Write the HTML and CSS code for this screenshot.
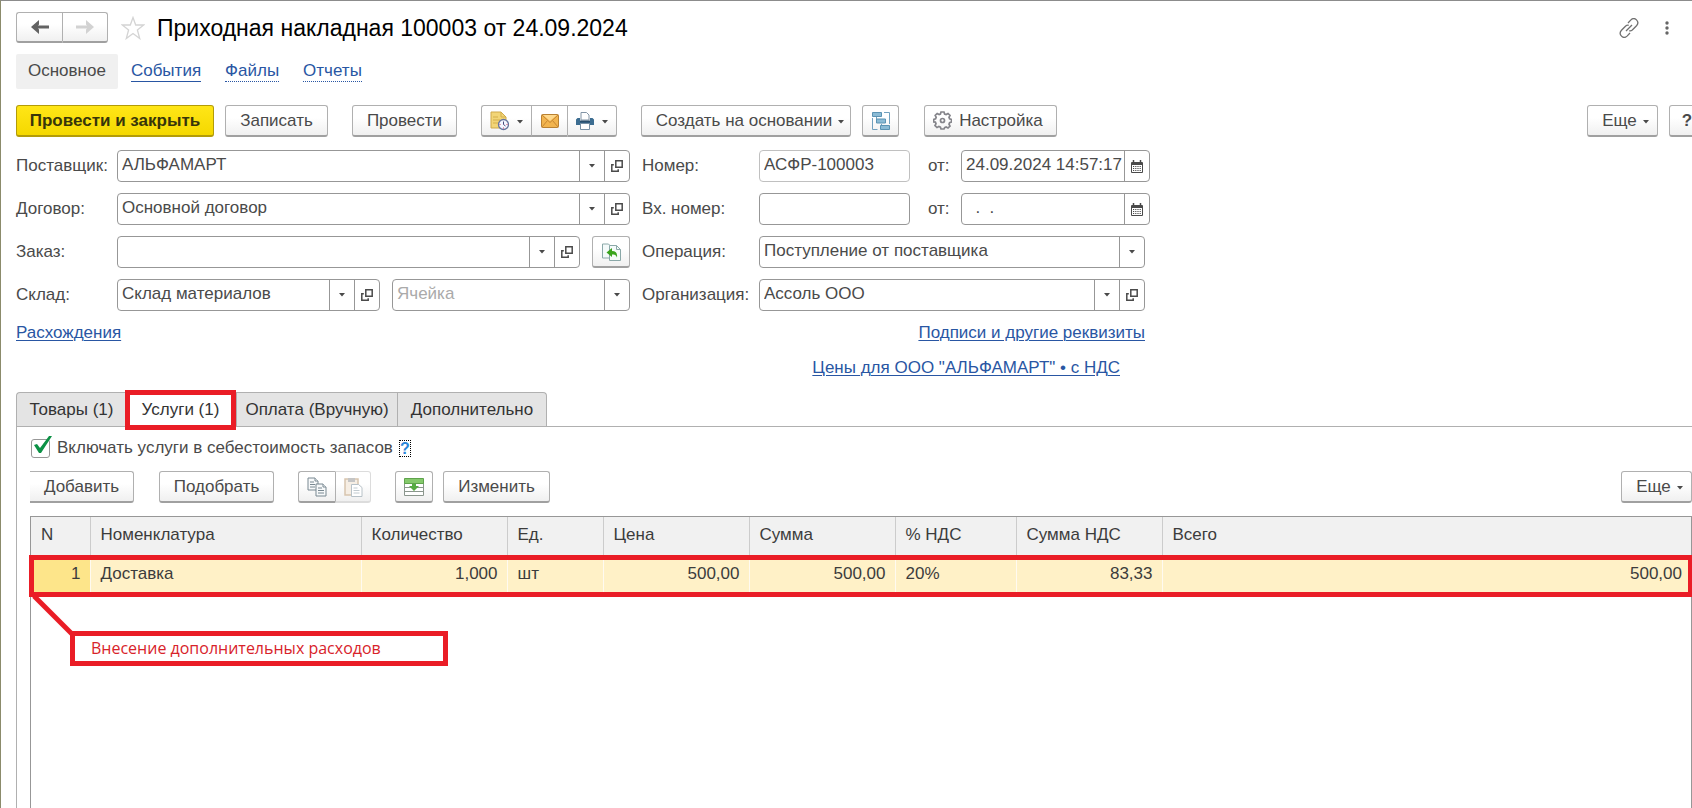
FILE: index.html
```html
<!DOCTYPE html>
<html lang="ru">
<head>
<meta charset="utf-8">
<title>Приходная накладная 100003 от 24.09.2024</title>
<link rel="stylesheet" href="styles.css">
</head>
<body>
<svg class="sprite" aria-hidden="true">
  <symbol id="caret" viewBox="0 0 6 4"><path d="M0 0h6L3 3.500z" fill="currentColor"/></symbol>
  <symbol id="open" viewBox="0 0 12 12"><g fill="none" stroke="currentColor" stroke-width="1.5"><path d="M4.8.8h6.400v6.400H4.800z"/><path d="M2.800 4.800h-2v6.400h6.400v-2"/></g></symbol>
  <symbol id="calendar" viewBox="0 0 12 13"><path d="M1 2h10q1 0 1 1v9q0 1-1 1H1q-1 0-1-1V3q0-1 1-1z" fill="#4a4a4a"/><path d="M2.500 0v3M9.500 0v3" stroke="#4a4a4a" stroke-width="1.500"/><path d="M1 5h10v7H1z" fill="#fff"/><path d="M2 6.500h8M2 8.500h8M2 10.500h8" stroke="#4a4a4a" stroke-dasharray="1.200 1"/></symbol>
</svg>
<main class="window">
  <header class="titlebar">
    <div class="group">
      <button class="btn nav" aria-label="Назад"><svg width="18" height="14" viewBox="0 0 18 14"><path d="M0 7l8-7v4.500l-1 1h11v3H7l1 1V14z" fill="#636363"/></svg></button>
      <button class="btn nav" aria-label="Вперед" disabled><svg width="18" height="14" viewBox="0 0 18 14"><path d="M18 7l-8-7v4.500l1 1H0v3h11l-1 1V14z" fill="#d2d2d2"/></svg></button>
    </div>
    <svg class="star" width="24" height="24" viewBox="0 0 24 24"><path d="M12 1.500l2.700 7.500h8l-6.300 5 2.300 8.500L12 17.500l-6.700 5L7.600 14 1.300 9h8z" fill="#fff" stroke="#d4d4d4" stroke-width="1.300"/></svg>
    <h1 class="title">Приходная накладная 100003 от 24.09.2024</h1>
    <button class="bare" aria-label="Ссылка"><svg width="20" height="20" viewBox="0 0 20 20" fill="none" stroke="#707070" stroke-width="1.300"><path d="M9 5l2.700-2.900c4-4 9.500 1.500 5.800 5.700l-4.200 4.200q-1.500 1.200-3 .6M11 15l-2.700 2.900c-4 4-9.500-1.500-5.800-5.700l4.200-4.200q1.500-1.200 3-.6M7 13l6-6"/></svg></button>
    <button class="bare" aria-label="Меню"><svg width="4" height="14" viewBox="0 0 4 14" fill="#666"><circle cx="2" cy="2" r="1.700"/><circle cx="2" cy="7" r="1.700"/><circle cx="2" cy="12" r="1.700"/></svg></button>
  </header>

  <nav class="sections">
    <span class="section-current">Основное</span>
    <a class="section solid" href="#">События</a>
    <a class="section" href="#">Файлы</a>
    <a class="section" href="#">Отчеты</a>
  </nav>

  <div class="toolbar commands">
    <button class="btn primary">Провести и закрыть</button>
    <button class="btn w-save">Записать</button>
    <button class="btn w-post">Провести</button>
    <div class="group reports">
      <button class="btn w-report" aria-label="Отчеты"><svg width="19" height="20" viewBox="0 0 19 20"><path d="M1 1h10l5 5v11H1z" fill="#f2d577" stroke="#cfa94a"/><path d="M11 1v5h5M3 6h5M3 9h7M3 12h5" fill="none" stroke="#d3ae4b"/><circle cx="13.500" cy="13.500" r="5" fill="#f4f6ff" stroke="#66749c" stroke-width="1.300"/><path d="M13.500 10.500v3l2 1.500" fill="none" stroke="#4a4a7a"/><path d="M9.500 13.500h1M16.500 13.500h1M13.500 16.500v1" stroke="#d46"/></svg><svg class="caret"><use href="#caret"/></svg></button>
      <button class="btn w-mail" aria-label="Отправить"><svg width="18" height="14" viewBox="0 0 18 14"><rect x=".5" y=".5" width="17" height="13" rx="1" fill="#f2b44e" stroke="#b98132"/><path d="M1 1l8 7.500L17 1M1 13l5.500-6.500M17 13l-5.500-6.500" fill="none" stroke="#c78733"/><path d="M2 1h14L9 7z" fill="#ffd98c"/></svg></button>
      <button class="btn w-report" aria-label="Печать"><svg width="18" height="18" viewBox="0 0 18 18"><path d="M5 8V.5h5.500L13 3v5z" fill="#fff" stroke="#8294a5"/><path d="M1.500 6H4v3h10V6h2.500L18 7.500V13H0V7.500z" fill="#3c6d91"/><path d="M4 8.500h10v2H4z" fill="#294e6d"/><path d="M4.500 11.500h9v6h-9z" fill="#fff" stroke="#7890a5"/></svg><svg class="caret"><use href="#caret"/></svg></button>
    </div>
    <button class="btn w-create">Создать на основании <svg class="caret"><use href="#caret"/></svg></button>
    <button class="btn w-tree" aria-label="Структура"><svg width="18" height="18" viewBox="0 0 18 18"><g fill="none" stroke="#72a1be"><path d="M.5 6v11.500h5M12 .5h5.500V12M4.500 5v5h4M9.500 12v4"/></g><g fill="#8bbbd5" stroke="#5b93b3"><path d="M.5.500h9v4h-9zM4.500 7h9v4h-9zM8.500 13.500h9v4h-9z"/></g></svg></button>
    <button class="btn w-setup"><svg width="19" height="19" viewBox="0 0 19 19" fill="none" stroke="#85858b" stroke-width="1.700"><path d="M8 1h3l.6 2 1.500.6L15 2.500 17 4.500l-1 1.900.6 1.500 1.900.6v2.500l-1.900.6-.6 1.500 1 1.900-2 2-1.900-1-1.500.6L11 18H8l-.6-1.900-1.500-.6-1.900 1-2-2 1-1.900-.6-1.500L.7 11V8.500l1.900-.6.6-1.500-1-1.900 2-2 1.900 1L7.400 3z"/><circle cx="9.500" cy="9.500" r="2"/></svg>Настройка</button>
    <button class="btn w-more push">Еще <svg class="caret"><use href="#caret"/></svg></button>
    <button class="btn w-help">?</button>
  </div>

  <form class="form">
    <div class="column">
      <div class="row"><label class="label" for="supplier">Поставщик:</label>
        <div class="field"><input class="input" id="supplier" value="АЛЬФАМАРТ"><button type="button" class="part" aria-label="Выбрать"><svg class="caret"><use href="#caret"/></svg></button><button type="button" class="part" aria-label="Открыть"><svg class="open"><use href="#open"/></svg></button></div></div>
      <div class="row"><label class="label" for="contract">Договор:</label>
        <div class="field"><input class="input" id="contract" value="Основной договор"><button type="button" class="part" aria-label="Выбрать"><svg class="caret"><use href="#caret"/></svg></button><button type="button" class="part" aria-label="Открыть"><svg class="open"><use href="#open"/></svg></button></div></div>
      <div class="row"><label class="label" for="order">Заказ:</label>
        <div class="field"><input class="input" id="order"><button type="button" class="part" aria-label="Выбрать"><svg class="caret"><use href="#caret"/></svg></button><button type="button" class="part" aria-label="Открыть"><svg class="open"><use href="#open"/></svg></button></div>
        <button type="button" class="btn w-fill" aria-label="Заполнить"><svg width="19" height="18" viewBox="0 0 19 18"><path d="M.5 1h6L9 3.500V15H.5z" fill="#f4fafa" stroke="#8aa8a8"/><path d="M7.500 2.500h7l4 4v11h-11z" fill="#f4fafa" stroke="#8aa8a8"/><path d="M14.500 2.500v4h4" fill="none" stroke="#8aa8a8"/><path d="M4.500 9.500L10 5v3c4 0 5.500 2 5 6.500-1-2.500-2.200-3-5-3V14z" fill="#38a31c"/></svg></button></div>
      <div class="row"><label class="label" for="store">Склад:</label>
        <div class="field"><input class="input" id="store" value="Склад материалов"><button type="button" class="part" aria-label="Выбрать"><svg class="caret"><use href="#caret"/></svg></button><button type="button" class="part" aria-label="Открыть"><svg class="open"><use href="#open"/></svg></button></div>
        <div class="field cell"><input class="input" aria-label="Ячейка" placeholder="Ячейка"><button type="button" class="part" aria-label="Выбрать"><svg class="caret"><use href="#caret"/></svg></button></div></div>
    </div>
    <div class="column second">
      <div class="row"><label class="label" for="number">Номер:</label>
        <div class="field short pale"><input class="input" id="number" value="АСФР-100003"></div>
        <label class="from" for="date">от:</label>
        <div class="field"><input class="input" id="date" value="24.09.2024 14:57:17"><button type="button" class="part" aria-label="Календарь"><svg class="calendar"><use href="#calendar"/></svg></button></div></div>
      <div class="row"><label class="label" for="innumber">Вх. номер:</label>
        <div class="field short"><input class="input" id="innumber"></div>
        <label class="from" for="indate">от:</label>
        <div class="field"><input class="input" id="indate" value="  .  ."><button type="button" class="part" aria-label="Календарь"><svg class="calendar"><use href="#calendar"/></svg></button></div></div>
      <div class="row inset"><label class="label" for="operation">Операция:</label>
        <div class="field"><select class="input" id="operation"><option>Поступление от поставщика</option></select><span class="part"><svg class="caret"><use href="#caret"/></svg></span></div></div>
      <div class="row inset"><label class="label" for="company">Организация:</label>
        <div class="field"><input class="input" id="company" value="Ассоль ООО"><button type="button" class="part" aria-label="Выбрать"><svg class="caret"><use href="#caret"/></svg></button><button type="button" class="part" aria-label="Открыть"><svg class="open"><use href="#open"/></svg></button></div></div>
    </div>
  </form>
  <div class="links"><a class="link" href="#">Расхождения</a><a class="link" href="#">Подписи и другие реквизиты</a></div>
  <div class="links prices"><a class="link" href="#">Цены для ООО "АЛЬФАМАРТ" • с НДС</a></div>

  <div class="tabs" role="tablist">
    <button class="tab t-goods" role="tab">Товары (1)</button>
    <button class="tab active" role="tab" aria-selected="true">Услуги (1)</button>
    <button class="tab t-pay" role="tab">Оплата (Вручную)</button>
    <button class="tab t-extra" role="tab">Дополнительно</button>
  </div>

  <section class="panel">
    <div class="include">
      <span class="check"><input class="checkbox" type="checkbox" id="include" checked><svg class="tick" width="20" height="18" viewBox="0 0 20 18"><path d="M2 9l3-1 3 4L17 0l3 0L9 17H7z" fill="#0b9145"/></svg></span>
      <label for="include">Включать услуги в себестоимость запасов</label>
      <button class="hint" aria-label="Справка">?</button>
    </div>
    <div class="toolbar rows">
      <button class="btn w-add">Добавить</button>
      <button class="btn w-pick">Подобрать</button>
      <div class="group clip">
        <button class="btn w-clip" aria-label="Копировать"><svg width="20" height="20" viewBox="0 0 20 20" fill="#f7f9fa" stroke="#788891"><path d="M1 1h7l3 3v9H1z"/><path d="M8 1v3h3M3 5h4M3 7.500h5M3 10h5"/><path d="M9 7h7l3 3v9H9z"/><path d="M16 7v3h3M11 11h4M11 13.500h6M11 16h6"/></svg></button>
        <button class="btn w-paste off" aria-label="Вставить" disabled><svg width="19" height="20" viewBox="0 0 19 20"><path d="M1 2h13v16H1z" fill="#f6eee4" stroke="#d8c5ae" stroke-width="1.500"/><path d="M4 1h7v4H4z" fill="#c5c5c5"/><path d="M7.500 7.500h7l3.500 3v9H7.500z" fill="#fff" stroke="#b8c2c8"/><path d="M9.500 11h4M9.500 13.500h6M9.500 16h6" stroke="#c2cbd0"/></svg></button>
      </div>
      <button class="btn w-grid" aria-label="Загрузить"><svg width="20" height="18" viewBox="0 0 20 18"><path d="M.5 5h19v12.500H.5z" fill="#fff" stroke="#8b968d"/><path d="M1 9.500h18M1 13.500h18" stroke="#8b968d"/><path d="M.5.500h19v5H.5z" fill="#84c96b" stroke="#5fa34c"/><path d="M8 6h4v2h3l-5 5-5-5h3z" fill="#56ab42"/></svg></button>
      <button class="btn w-edit">Изменить</button>
      <button class="btn w-more push">Еще <svg class="caret"><use href="#caret"/></svg></button>
    </div>
    <div class="grid">
      <table class="table">
        <colgroup><col class="c-n"><col class="c-name"><col class="c-sum"><col class="c-unit"><col class="c-sum"><col class="c-sum"><col class="c-vat"><col class="c-sum"><col></colgroup>
        <thead><tr><th>N</th><th>Номенклатура</th><th>Количество</th><th>Ед.</th><th>Цена</th><th>Сумма</th><th>% НДС</th><th>Сумма НДС</th><th>Всего</th></tr></thead>
        <tbody><tr><td class="num first">1</td><td>Доставка</td><td class="num">1,000</td><td>шт</td><td class="num">500,00</td><td class="num">500,00</td><td>20%</td><td class="num">83,33</td><td class="num">500,00</td></tr></tbody>
      </table>
      <div class="row-mark"></div>
      <svg class="leader" width="44" height="44" viewBox="0 0 44 44"><path d="M2 2l40 40" stroke="#ea1d26" stroke-width="5"/></svg>
      <div class="callout">Внесение дополнительных расходов</div>
    </div>
  </section>
</main>
</body>
</html>
```
FILE: styles.css
```css
* { box-sizing: border-box; }
html, body { height: 100%; }
body { margin: 0; overflow: hidden; background: #fff; color: #4a4a4a; font: 17px/20px "Liberation Sans", Arial, sans-serif; }
button, input, select { font: inherit; color: inherit; }
svg { flex: none; }
.sprite { position: absolute; width: 0; height: 0; }
.window { height: 100vh; display: flex; flex-direction: column; padding: 11px 0 0 15px; border-top: 1px solid #8c8c8c; border-left: 1px solid #8b8b6b; }
.group { display: flex; }
.caret { width: 6px; height: 4px; }
.btn .caret { margin-top: 3px; }
.open { width: 12px; height: 12px; }
.calendar { width: 12px; height: 13px; }

.btn { height: 32px; padding: 0; display: flex; align-items: center; justify-content: center; gap: 8px; flex: none; border: 1px solid #b0b0b0; border-bottom: 2px solid #a0a0a0; border-radius: 3px; background: linear-gradient(#fff 40%, #f0f0f0); white-space: nowrap; }
.group .btn:not(:last-child) { border-right: 0; border-radius: 3px 0 0 3px; }
.group .btn:not(:first-child) { border-radius: 0 3px 3px 0; }
.group .btn:not(:first-child):not(:last-child) { border-radius: 0; }
.btn.nav { width: 46px; height: 31px; }

.titlebar { display: flex; align-items: center; padding-right: 20px; }
.star { margin: 0 12px 0 13px; }
.title { flex: 1; margin: 0; font-size: 23px; line-height: 28px; font-weight: 400; color: #000; }
.bare { display: flex; margin-left: 20px; padding: 0 3px; border: 0; background: none; }

.sections { display: flex; align-items: center; gap: 24px; margin-top: 11px; }
.section-current { padding: 7px 12px 8px; margin-right: -11px; background: #f0f0f0; border-radius: 2px; }
.section { line-height: 20px; color: #2956a3; text-decoration: none; border-bottom: 1px dotted #2956a3; }
.section.solid { border-bottom-style: solid; }

.toolbar { display: flex; align-items: center; }
.commands { margin: 16px -13px 0 0; }
.primary { width: 198px; margin-right: 11px; font-weight: 700; color: #37350a; background: linear-gradient(#ffe617, #f5d800); border-color: #b39c08; }
.w-save { width: 103px; margin-right: 24px; }
.w-post { width: 105px; margin-right: 24px; }
.reports { margin-right: 24px; }
.w-report { width: 50px; }
.w-mail { width: 36px; }
.btn.w-create { width: 210px; margin-right: 11px; padding-left: 8px; gap: 6px; }
.w-tree { width: 37px; margin-right: 25px; }
.btn.w-setup { width: 133px; padding-right: 5px; gap: 7px; }
.push { margin-left: auto; }
.btn.w-more { width: 71px; padding-left: 6px; gap: 6px; }
.commands .w-more { margin-right: 11px; }
.w-help { width: 36px; font-weight: 700; }

.form { display: flex; gap: 12px; margin-top: 13px; }
.column { width: 614px; display: grid; gap: 11px; }
.second { width: 508px; }
.row { display: flex; align-items: center; }
.label { width: 101px; flex: none; }
.second .label { width: 117px; }
.inset { padding-right: 5px; }
.field { flex: 1; min-width: 0; height: 32px; display: flex; border: 1px solid #979797; border-radius: 4px; background: #fff; overflow: hidden; }
.field.short { flex: 0 0 151px; }
.field.pale { border-color: #c0c0c0; }
.field.cell { flex: 0 0 238px; margin-left: 12px; }
.from { width: 51px; padding-left: 18px; flex: none; }
.input { flex: 1; min-width: 0; width: 0; padding: 0 0 2px 4px; border: 0; outline: 0; background: none; appearance: none; white-space: pre; }
.input::placeholder { color: #aaa; }
.part { width: 25px; padding: 0; display: flex; align-items: center; justify-content: center; flex: none; border: 0; border-left: 1px solid #979797; background: none; }
.w-fill { width: 38px; margin-left: 12px; }

.links { width: 1129px; display: flex; justify-content: space-between; margin-top: 12px; }
.links.prices { width: 1104px; justify-content: flex-end; margin-top: 15px; }
.link { color: #2956a3; text-underline-offset: 2px; text-decoration-thickness: 1px; }

.tabs { display: flex; margin-top: 14px; position: relative; }
.tab { height: 34px; padding: 0; border: 1px solid #b0b0b0; border-bottom: 0; border-right: 0; background: #e4e4e4; color: #333; white-space: nowrap; }
.t-goods { width: 110px; border-radius: 4px 0 0 0; }
.t-pay { width: 161px; }
.t-extra { width: 150px; border-right: 1px solid #b0b0b0; border-radius: 0 4px 0 0; }
.tab.active { width: 111px; height: 40px; margin: -2px 0 -4px -1px; border: 5px solid #ea1d26; background: #fff; position: relative; }

.panel { flex: 1; min-height: 0; display: flex; flex-direction: column; padding: 10px 0 0 13px; border: 1px solid #b0b0b0; border-width: 1px 0 0 1px; }
.include { display: flex; align-items: center; }
.check { position: relative; display: flex; margin: 2px 7px 0 1px; }
.checkbox { appearance: none; width: 19px; height: 19px; margin: 0; border: 1px solid #979797; border-radius: 3px; }
.tick { position: absolute; left: 1px; top: -3px; pointer-events: none; }
.hint { width: 12px; height: 17px; margin: 2px 0 0 6px; padding: 0; border: 1px dotted #000; background: none; color: #2b86d8; font-weight: 700; font-size: 16px; line-height: 15px; }
.rows { margin-top: 13px; }
.w-add { width: 104px; margin-right: 25px; border-left: 0; border-radius: 0 3px 3px 0; }
.w-pick { width: 115px; margin-right: 24px; }
.clip { margin-right: 24px; }
.w-clip { width: 37px; }
.w-paste { width: 36px; }
.btn.off { border-color: #dcdcdc; }
.group .btn.off { border-left-color: #b0b0b0; }
.w-grid { width: 38px; margin-right: 10px; }
.w-edit { width: 107px; }

.grid { flex: 1; min-height: 0; position: relative; margin-top: 13px; border: 1px solid #979797; border-bottom: 0; }
.table { width: 100%; table-layout: fixed; border-collapse: collapse; color: #3c3c3c; }
.c-n { width: 59px; }
.c-name { width: 271px; }
.c-sum { width: 146px; }
.c-unit { width: 96px; }
.c-vat { width: 121px; }
.table th { height: 41px; padding: 0 10px 6px; text-align: left; font-weight: 400; background: #f1f1f1; border-right: 1px solid #ccc; }
.table td { height: 36px; padding: 0 10px 4px; background: #fff1c7; border-right: 1px solid #fffaf0; }
.table th:last-child, .table td:last-child { border-right: 0; }
.table .num { text-align: right; padding-right: 9px; }
.table .first { background: #fde58a; }
.row-mark { position: absolute; left: -2px; right: -2px; top: 38px; height: 42px; border: 5px solid #ea1d26; }
.leader { position: absolute; left: 1px; top: 77px; }
.callout { position: absolute; left: 39px; top: 114px; width: 378px; height: 35px; padding-left: 16px; border: 5px solid #ea1d26; background: #fff; color: #d8232a; font: 16px/24px "Open Sans", "Noto Sans", sans-serif; }
```
